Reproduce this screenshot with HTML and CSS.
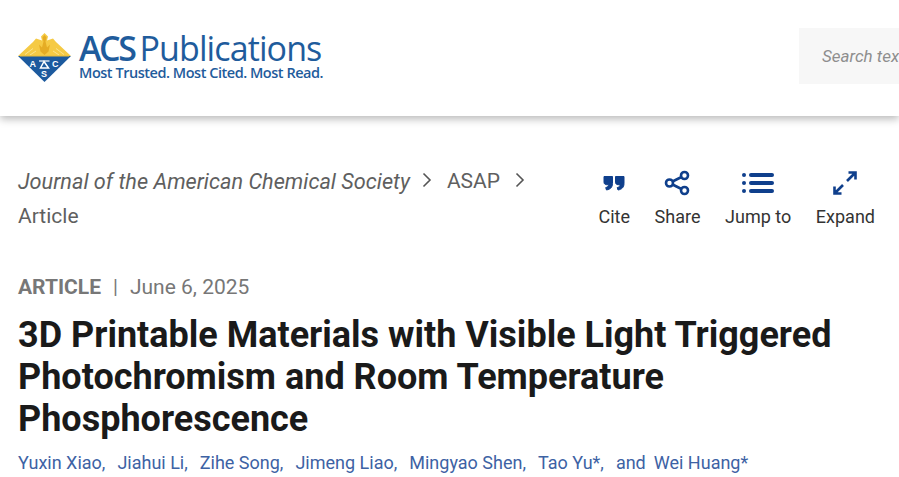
FILE: index.html
```html
<!DOCTYPE html>
<html lang="en">
<head>
<meta charset="utf-8">
<title>3D Printable Materials</title>
<link rel="stylesheet" href="styles.css">
</head>
<body>
<header class="site-header">
  <a class="logo">
    <svg class="logo-mark" width="54" height="52" viewBox="0 0 54 52" aria-hidden="true">
      <polygon points="0,24 53,24 26.500,50" fill="#1c5a9e"/>
      <path d="M26.500 1l3.500 3.500-1 4 6-2 3 3.500 15 14H0l15-14 3-3.500 6 2-1-4z" fill="#f5ca45"/>
      <path d="M26.500 3l2 2.500-1 4 1.500 6 3-3-1.500 7-4 3.500-4-3.500-1.500-7 3 3 1.500-6-1-4z" fill="#e5ac24"/>
      <path d="M7 22.500l8-6M46 22.500l-8-6M12 23l6-4M41 23l-6-4" stroke="#fbe48f" stroke-width="1" fill="none"/>
      <path d="M2 24h49" stroke="#e9bd3c" stroke-width="1"/>
      <path d="M26 29.500l-3.500 6.500h8z" fill="none" stroke="#fff" stroke-width="1.500"/>
      <path d="M21 29h10.500" stroke="#fff" stroke-width="1.200"/>
      <text x="11.500" y="34.500" class="logo-letter">A</text>
      <text x="34" y="34.500" class="logo-letter">C</text>
      <text x="23" y="45" class="logo-letter">S</text>
    </svg>
    <span class="logo-text">
      <span class="logo-name"><b>ACS</b><span class="logo-pub">Publications</span></span>
      <span class="logo-tag">Most Trusted. Most Cited. Most Read.</span>
    </span>
  </a>
  <div class="search"><span class="search-text">Search text</span></div>
</header>

<main class="content">
  <div class="toprow">
    <nav class="crumbs">
      <a class="crumb-journal">Journal of the American Chemical Society</a>
      <svg class="chev" width="12" height="16" viewBox="0 0 12 16"><path d="M2.500 1.500L9 8l-6.500 6.500" fill="none" stroke="#555" stroke-width="1.600"/></svg>
      <a class="crumb">ASAP</a>
      <svg class="chev" width="12" height="16" viewBox="0 0 12 16"><path d="M2.500 1.500L9 8l-6.500 6.500" fill="none" stroke="#555" stroke-width="1.600"/></svg>
      <a class="crumb crumb-last">Article</a>
    </nav>
    <ul class="tools">
      <li class="tool">
        <svg width="24" height="24" viewBox="0 0 24 24"><path d="M2 5.500h8.500v7c0 4-2.500 6-6 6.500l-.8-2.400c1.900-.5 2.800-1.400 2.900-2.900H4.500C3 13.700 2 12.700 2 11.200zM13.500 5.500H22v7c0 4-2.500 6-6 6.500l-.8-2.400c1.900-.5 2.800-1.400 2.900-2.900H16c-1.500 0-2.500-1-2.500-2.500z" fill="#0f3f8c" stroke="#0f3f8c" stroke-linejoin="round"/></svg>
        <span>Cite</span>
      </li>
      <li class="tool">
        <svg width="28" height="24" viewBox="0 0 28 24" fill="none" stroke="#0f3f8c" stroke-width="2.600"><circle cx="20.500" cy="4.500" r="3.500"/><circle cx="5.500" cy="12" r="3.500"/><circle cx="20.500" cy="19.500" r="3.500"/><path d="M8.500 10.500l9-4.500M8.500 13.500l9 4.500"/></svg>
        <span>Share</span>
      </li>
      <li class="tool">
        <svg width="32" height="24" viewBox="0 0 32 24" fill="#0f3f8c"><circle cx="2" cy="4" r="2"/><circle cx="2" cy="12" r="2"/><circle cx="2" cy="20" r="2"/><rect x="7" y="2" width="25" height="4" rx="2"/><rect x="7" y="10" width="25" height="4" rx="2"/><rect x="7" y="18" width="25" height="4" rx="2"/></svg>
        <span>Jump to</span>
      </li>
      <li class="tool">
        <svg width="26" height="26" viewBox="0 0 26 26" fill="none" stroke="#0f3f8c" stroke-width="2.600"><path d="M15 11l8-8M16.500 2.500h7v7M11 15l-8 8M2.500 16.500v7h7"/></svg>
        <span>Expand</span>
      </li>
    </ul>
  </div>

  <p class="meta"><b>ARTICLE</b><span class="sep">|</span><span>June 6, 2025</span></p>
  <h1 class="title">3D Printable Materials with Visible Light Triggered Photochromism and Room Temperature Phosphorescence</h1>
  <ul class="authors">
    <li>Yuxin Xiao,</li>
    <li>Jiahui Li,</li>
    <li>Zihe Song,</li>
    <li>Jimeng Liao,</li>
    <li>Mingyao Shen,</li>
    <li>Tao Yu*,</li>
    <li class="and">and</li>
    <li>Wei Huang*</li>
  </ul>
</main>
</body>
</html>
```
FILE: styles.css
```css
* { box-sizing: border-box; }
html, body { margin: 0; padding: 0; }
body {
  width: 899px;
  height: 477px;
  overflow: hidden;
  background: #fff;
  font-family: Roboto, "Liberation Sans", sans-serif;
  color: #1a1a1a;
}
.site-header {
  height: 116px;
  display: flex;
  align-items: flex-start;
  justify-content: space-between;
  padding: 28px 0 0 18px;
  box-shadow: 0 3px 8px rgba(0,0,0,.28);
  overflow: hidden;
}
.logo { display: flex; gap: 8px; padding-top: 4px; }
.logo-mark { flex: none; }
.logo-letter { font: 700 9px "Liberation Sans", sans-serif; fill: #fff; }
.logo-text { display: flex; flex-direction: column; margin: 1px 0 0 -1px; color: #1f5c9c; font-family: "Open Sans", sans-serif; }
.logo-name { font-size: 34px; line-height: 31px; letter-spacing: -1.2px; display: flex; gap: 5px; }
.logo-name b { font-weight: 600; letter-spacing: -2.4px; }
.logo-pub { letter-spacing: -.9px; }
.logo-tag { font-size: 14.5px; line-height: 18px; font-weight: 600; letter-spacing: -.47px; }
.search {
  width: 100px;
  height: 56px;
  background: #f7f7f7;
  padding-left: 23px;
  display: flex;
  align-items: center;
  white-space: nowrap;
  overflow: hidden;
  flex: none;
}
.search-text { font-size: 17px; font-style: italic; color: #8e8e8e; }
.content { padding: 0 18px; }
.toprow { display: flex; justify-content: space-between; padding-top: 48px; }
.crumbs {
  width: 540px;
  font-size: 21px;
  line-height: 35px;
  color: #5f5f5f;
  display: flex;
  flex-wrap: wrap;
  align-items: center;
  align-content: flex-start;
}
.crumb-journal { font-style: italic; font-size: 21.7px; }
.chev { margin: -4px 12px 0 11px; }
.chev:last-of-type { margin-left: 14px; margin-right: 20px; }
.crumb { margin-left: 2px; }
.crumb-last { margin-left: 0; }
.tools {
  list-style: none;
  margin: 6px 6px 0 0;
  padding: 0;
  display: flex;
  gap: 24.6px;
}
.tool {
  display: flex;
  flex-direction: column;
  align-items: center;
  font-size: 18px;
  line-height: 22px;
  color: #333;
  gap: 10px;
}
.tool svg { height: 26px; }
.meta { margin: 39px 0 0; font-size: 21px; line-height: 28px; color: #777; }
.meta b { font-weight: 700; }
.sep { margin: 0 12px 0 12px; font-size: 20px; }
.title { margin: 13px 0 0; font-size: 36px; line-height: 42px; font-weight: 700; color: #1a1a1a; max-width: 840px; }
.authors {
  list-style: none;
  margin: 11px 0 0;
  padding: 0;
  display: flex;
  gap: 12px;
  font-size: 18px;
  line-height: 24px;
  color: #3d62a4;
}
.authors .and { color: #3d62a4; margin-right: -4px; }
```
